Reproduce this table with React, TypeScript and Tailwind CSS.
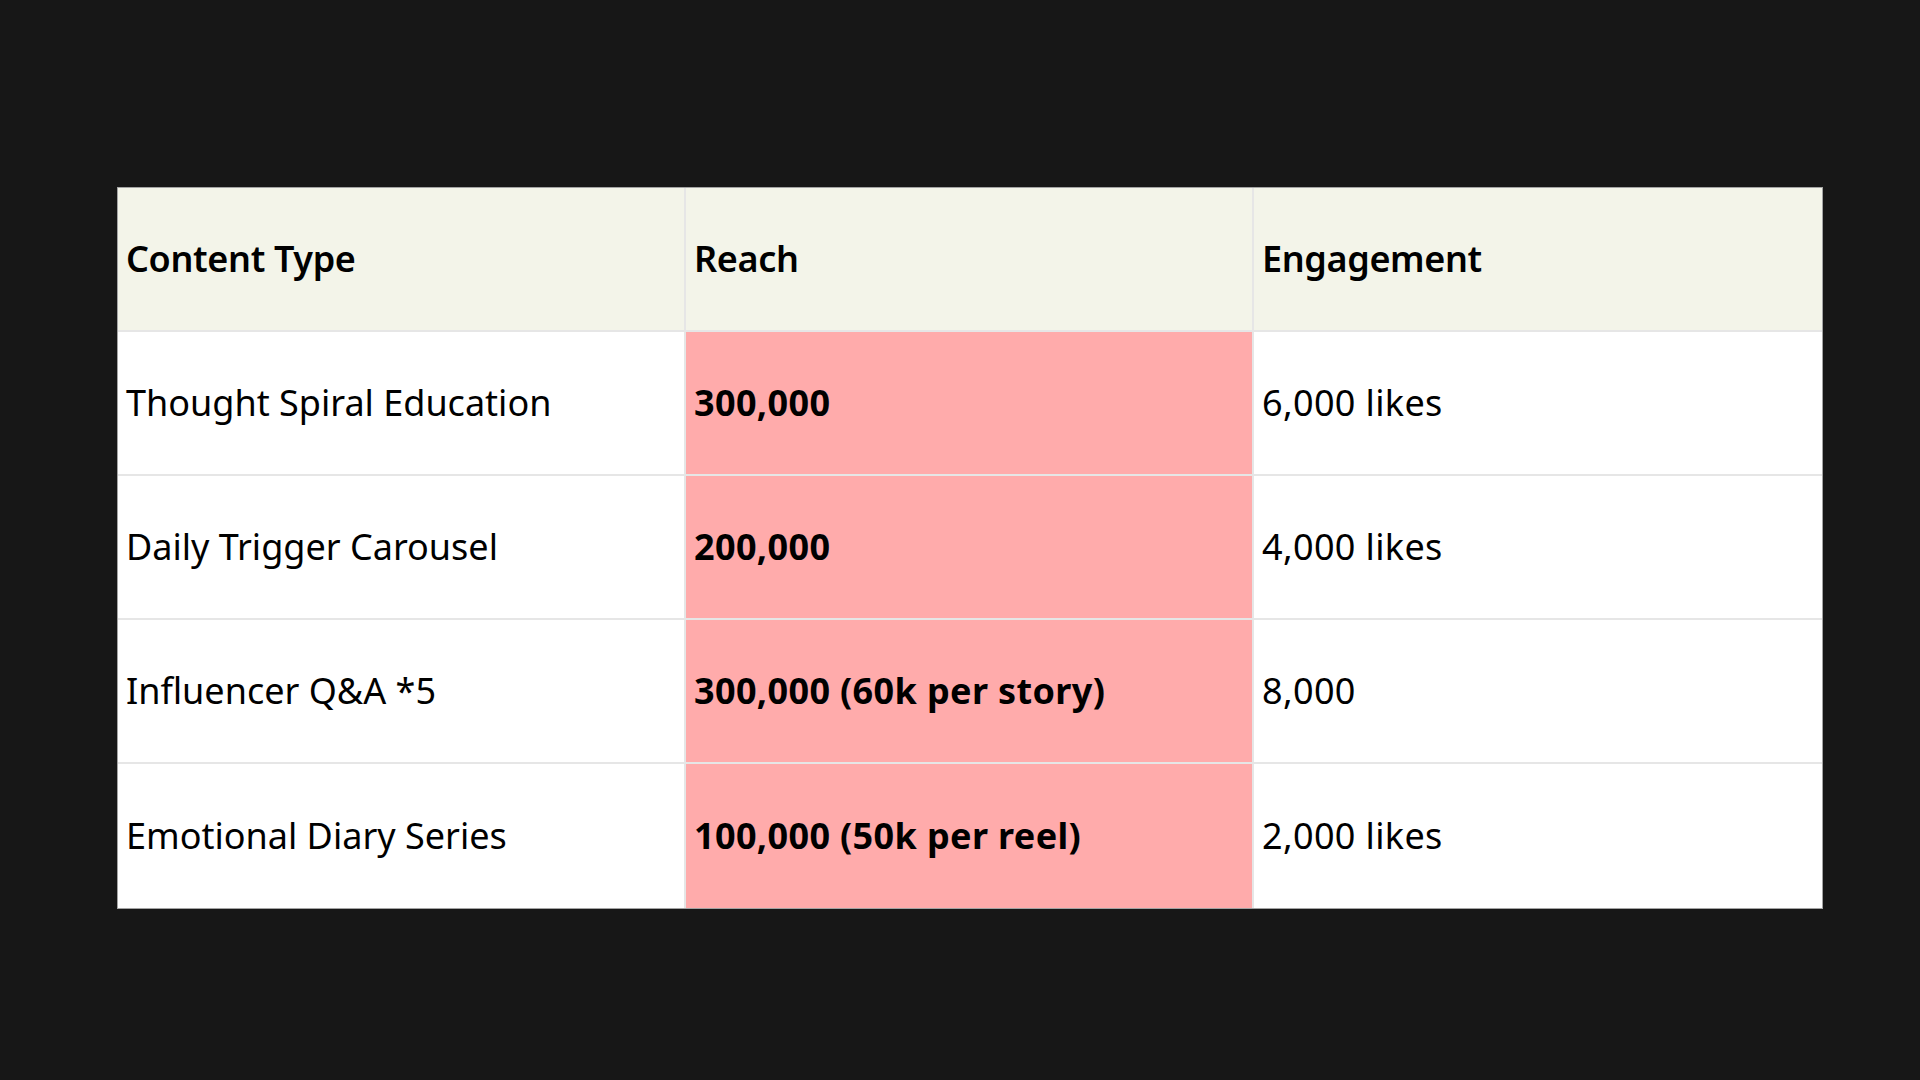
const rows = [
  { type: 'Thought Spiral Education', reach: '300,000', engagement: '6,000 likes' },
  { type: 'Daily Trigger Carousel', reach: '200,000', engagement: '4,000 likes' },
  { type: 'Influencer Q&A *5', reach: '300,000 (60k per story)', engagement: '8,000' },
  { type: 'Emotional Diary Series', reach: '100,000 (50k per reel)', engagement: '2,000 likes' },
]

export default function App() {
  return (
    <main
      className="min-h-screen w-full bg-[#171717] pt-[187px] pl-[117px]"
      style={{ fontFamily: '"Noto Sans", "Open Sans", sans-serif' }}
    >
      <div className="w-[1706px] grid grid-cols-3 border border-[#a3a3a3] text-[36px] text-black">
        {/* header */}
        {['Content Type', 'Reach', 'Engagement'].map((h, i) => (
          <div
            key={h}
            className={`h-[144px] flex items-center px-[8px] bg-[#f3f4e9] font-semibold tracking-[-0.01em] border-b-2 border-[#e6e6e6] ${i < 2 ? 'border-r-2' : ''}`}
          >
            {h}
          </div>
        ))}

        {rows.map((row, idx) => {
          const last = idx === rows.length - 1
          return (
            <div key={row.type} className="contents">
              <div className={`h-[144px] flex items-center px-[8px] bg-white border-r-2 border-[#e6e6e6] ${last ? '' : 'border-b-2'}`}>
                {row.type}
              </div>
              <div className={`h-[144px] flex items-center px-[8px] bg-[#ffabab] font-bold tracking-[0.01em] border-r-2 border-[#e6e6e6] ${last ? '' : 'border-b-2'}`}>
                {row.reach}
              </div>
              <div className={`h-[144px] flex items-center px-[8px] bg-white tracking-[0.01em] border-[#e6e6e6] ${last ? '' : 'border-b-2'}`}>
                {row.engagement}
              </div>
            </div>
          )
        })}
      </div>
    </main>
  )
}
